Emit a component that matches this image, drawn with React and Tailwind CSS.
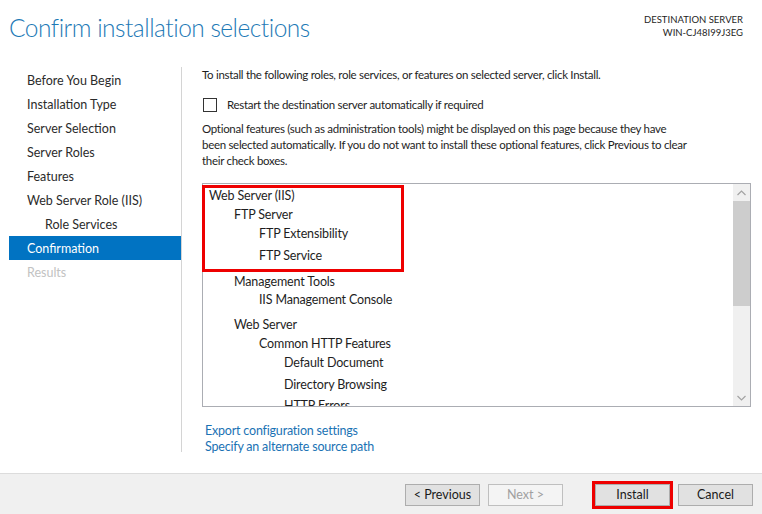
import React from "react";

const navItems = [
  { label: "Before You Begin" },
  { label: "Installation Type" },
  { label: "Server Selection" },
  { label: "Server Roles" },
  { label: "Features" },
  { label: "Web Server Role (IIS)" },
  { label: "Role Services", indent: true },
  { label: "Confirmation", active: true },
  { label: "Results", disabled: true },
];

const treeItems = [
  { label: "Web Server (IIS)", level: 0, mt: 0 },
  { label: "FTP Server", level: 1, mt: 3 },
  { label: "FTP Extensibility", level: 2, mt: 3 },
  { label: "FTP Service", level: 2, mt: 6 },
  { label: "Management Tools", level: 1, mt: 10 },
  { label: "IIS Management Console", level: 2, mt: 2 },
  { label: "Web Server", level: 1, mt: 9 },
  { label: "Common HTTP Features", level: 2, mt: 3 },
  { label: "Default Document", level: 3, mt: 3 },
  { label: "Directory Browsing", level: 3, mt: 6 },
  { label: "HTTP Errors", level: 3, mt: 5 },
];

const levelPad = ["pl-[6px]", "pl-[31px]", "pl-[56px]", "pl-[81px]"];
const mtCls = {
  0: "mt-0",
  2: "mt-[2px]",
  3: "mt-[3px]",
  5: "mt-[5px]",
  6: "mt-[6px]",
  9: "mt-[9px]",
  10: "mt-[10px]",
};

function Btn({ children, disabled, highlight }) {
  const base =
    "h-[22px] w-[75px] flex items-center justify-center text-[12.5px] leading-none border";
  const cls = disabled
    ? "bg-[#f4f4f4] border-[#bfbfbf] text-[#a0a0a0]"
    : "bg-[#e1e1e1] border-[#adadad] text-[#1a1a1a]";
  if (highlight) {
    return (
      <div className="border-[3px] border-[#ee0000] -m-[3px]">
        <div className={`${base} ${cls}`}>{children}</div>
      </div>
    );
  }
  return <div className={`${base} ${cls}`}>{children}</div>;
}

export default function App() {
  return (
    <div
      className="w-[762px] h-[514px] bg-white flex flex-col overflow-hidden text-[#1e1e1e]"
      style={{ fontFamily: 'Lato, "Open Sans", sans-serif' }}
    >
      {/* Header */}
      <div className="h-[67px] flex justify-between">
        <div className="pl-[9px] pt-[11px] text-[24.5px] leading-[34px] font-light text-[#1e7ab6] tracking-[-0.5px]">
          Confirm installation selections
        </div>
        <div className="pr-[19px] pt-[13px] text-right text-[9.5px] leading-[13px] text-[#1e1e1e]">
          <div>DESTINATION SERVER</div>
          <div>WIN-CJ48I99J3EG</div>
        </div>
      </div>

      {/* Body */}
      <div className="flex-1 flex">
        <div className="w-[182px] h-[385px] border-r border-[#d4d4d4] pl-[9px] pt-[1px]">
          {navItems.map((it) => (
            <div
              key={it.label}
              className={`h-[24px] flex items-center pt-[2px] text-[12.5px] ${
                it.indent ? "pl-[36px]" : "pl-[18px]"
              } ${
                it.active
                  ? "bg-[#0173c2] text-white"
                  : it.disabled
                  ? "text-[#c2c2c2]"
                  : "text-[#2b2b2b]"
              }`}
            >
              {it.label}
            </div>
          ))}
        </div>

        <div className="flex-1 pl-[20px] pr-[11px] text-[12.5px]">
          <div className="leading-[16px] text-[11.5px] tracking-[-0.3px] whitespace-nowrap">
            To install the following roles, role services, or features on selected server, click Install.
          </div>
          <div className="flex items-center mt-[14px] h-[16px]">
            <div className="w-[14px] h-[14px] border border-[#333] bg-white ml-[1px]" />
            <div className="ml-[10px] leading-[16px] text-[11.5px] tracking-[-0.3px]">
              Restart the destination server automatically if required
            </div>
          </div>
          <div className="leading-[16px] mt-[8px] text-[11.5px] tracking-[-0.3px] whitespace-nowrap">
            <div>Optional features (such as administration tools) might be displayed on this page because they have</div>
            <div>been selected automatically. If you do not want to install these optional features, click Previous to clear</div>
            <div>their check boxes.</div>
          </div>

          {/* List box */}
          <div className="relative mt-[14px] h-[224px] border border-[#abadb3] bg-white flex">
            <div className="flex-1 overflow-hidden pt-[4px] tracking-[-0.15px]">
              {treeItems.map((t) => (
                <div
                  key={t.label}
                  className={`h-[16px] leading-[16px] whitespace-nowrap ${levelPad[t.level]} ${mtCls[t.mt]}`}
                >
                  {t.label}
                </div>
              ))}
            </div>
            <div className="w-[17px] bg-[#f0f0f0] flex flex-col">
              <div className="h-[17px] flex items-center justify-center">
                <svg width="9" height="6" viewBox="0 0 9 6">
                  <path d="M0.5 5 L4.5 1 L8.5 5" fill="none" stroke="#a3a3a3" strokeWidth="1.2" />
                </svg>
              </div>
              <div className="h-[105px] bg-[#cdcdcd]" />
              <div className="flex-1" />
              <div className="h-[17px] flex items-center justify-center">
                <svg width="9" height="6" viewBox="0 0 9 6">
                  <path d="M0.5 1 L4.5 5 L8.5 1" fill="none" stroke="#a3a3a3" strokeWidth="1.2" />
                </svg>
              </div>
            </div>
            <div className="absolute left-[-1px] top-[1px] w-[202px] h-[87px] border-[3px] border-[#ee0000]" />
          </div>

          <div className="mt-[16px] pl-[3px] text-[#1a72b4] leading-[16px] tracking-[-0.2px]">
            <div>Export configuration settings</div>
            <div>Specify an alternate source path</div>
          </div>
        </div>
      </div>

      {/* Footer */}
      <div className="h-[41px] bg-[#f0f0f0] border-t border-[#dcdcdc] flex items-start pt-[10px] pl-[405px]">
        <Btn>&lt; Previous</Btn>
        <div className="w-[8px]" />
        <Btn disabled>Next &gt;</Btn>
        <div className="w-[32px]" />
        <Btn highlight>Install</Btn>
        <div className="w-[8px]" />
        <Btn>Cancel</Btn>
      </div>
    </div>
  );
}
